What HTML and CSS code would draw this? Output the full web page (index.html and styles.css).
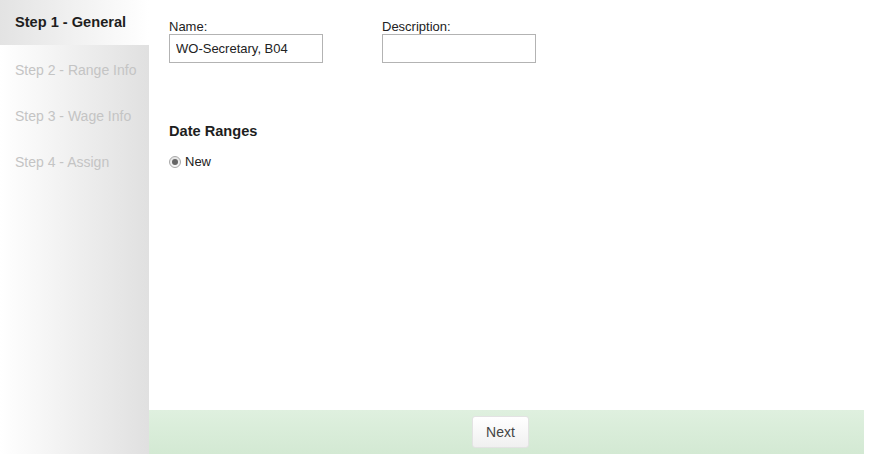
FILE: index.html
```html
<!DOCTYPE html>
<html>
<head>
<meta charset="utf-8">
<link rel="stylesheet" href="styles.css">
</head>
<body>
<div class="wizard">
  <nav class="steps">
    <div class="step active">Step 1 - General</div>
    <div class="step">Step 2 - Range Info</div>
    <div class="step">Step 3 - Wage Info</div>
    <div class="step">Step 4 - Assign</div>
  </nav>
  <div class="pane">
    <div class="content">
      <div class="fields">
        <div class="field">
          <label class="lbl">Name:</label>
          <input class="inp" type="text" value="WO-Secretary, B04">
        </div>
        <div class="field">
          <label class="lbl">Description:</label>
          <input class="inp" type="text" value="">
        </div>
      </div>
      <h3 class="heading">Date Ranges</h3>
      <label class="radio-row"><span class="radio"><span class="dot"></span></span>New</label>
    </div>
    <div class="footer">
      <button class="btn">Next</button>
    </div>
  </div>
</div>
</body>
</html>
```
FILE: styles.css
```css
html, body { margin: 0; padding: 0; background: #fff; }
body { font-family: "Liberation Sans", Arial, sans-serif; font-size: 13px; color: #222; }
.wizard { display: flex; width: 864px; height: 454px; }
.steps { width: 149px; flex: none; background: linear-gradient(to right, #ffffff, #e0e0e0); }
.step { height: 46px; line-height: 46px; padding-left: 15px; font-size: 14px; color: #c4c4c4; white-space: nowrap; }
.step.active { height: 45px; line-height: 44px; margin-bottom: 2px; color: #1e1e1e; font-weight: bold; font-size: 14.6px; background: linear-gradient(to right, #e3e3e3, #ffffff); }
.pane { flex: 1; display: flex; flex-direction: column; }
.content { flex: 1; padding: 19px 0 0 20px; }
.fields { display: flex; }
.field { width: 213px; display: flex; flex-direction: column; }
.lbl { line-height: 15px; color: #222; }
.inp { box-sizing: border-box; width: 154px; height: 29px; border: 1px solid #b3b3b3; padding: 0 6px; margin: 0; font-family: "Liberation Sans", Arial, sans-serif; font-size: 13px; color: #222; outline: none; }
.heading { margin: 59px 0 0; font-size: 14.6px; font-weight: bold; line-height: 18px; color: #1e1e1e; }
.radio-row { display: flex; align-items: center; margin-top: 14px; line-height: 15px; color: #222; }
.radio { box-sizing: border-box; width: 12px; height: 12px; border-radius: 50%; border: 1px solid #a8a8a8; background: linear-gradient(#e4e4e4, #f8f8f8); display: flex; align-items: center; justify-content: center; margin: 0 4px 0 0; }
.dot { width: 6px; height: 6px; border-radius: 50%; background: #666; }
.footer { height: 44px; flex: none; background: linear-gradient(#dff0df, #d3e9d3); display: flex; align-items: center; justify-content: center; padding-right: 12px; }
.btn { width: 57px; height: 32px; border: 1px solid #e3e3e3; border-radius: 3px; background: linear-gradient(#ffffff, #f0f0f0); font-family: "Liberation Sans", Arial, sans-serif; font-size: 14px; color: #444; padding: 0; }
```
